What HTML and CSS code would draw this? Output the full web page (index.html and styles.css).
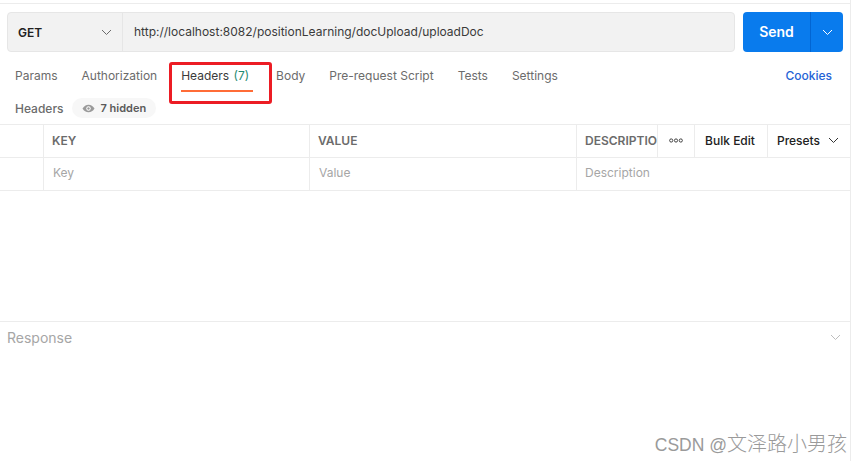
FILE: index.html
```html
<!DOCTYPE html>
<html>
<head>
    <title>Headers</title>
    <link rel="stylesheet" href="styles.css">
</head>
<body>
    <div class="panel">
        <div class="url-row">
            <div class="url-box">
                <div class="method">
                    <span>GET</span>
                    <svg class="chev" width="11" height="7" viewBox="0 0 11 7"><path d="M1 1l4.5 4.5L10 1" fill="none" stroke="#6b6b6b"/></svg>
                </div>
                <div class="url">http://localhost:8082/positionLearning/docUpload/uploadDoc</div>
            </div>
            <div class="send">
                <div class="send-label">Send</div>
                <div class="send-more">
                    <svg width="11" height="7" viewBox="0 0 11 7"><path d="M1 1l4.5 4.5L10 1" fill="none" stroke="#fff"/></svg>
                </div>
            </div>
        </div>

        <div class="tabs">
            <div class="tab">Params</div>
            <div class="tab">Authorization</div>
            <div class="tab active">Headers <span class="count">(7)</span></div>
            <div class="tab">Body</div>
            <div class="tab">Pre-request Script</div>
            <div class="tab">Tests</div>
            <div class="tab">Settings</div>
            <div class="cookies">Cookies</div>
        </div>
        <div class="mark"></div>

        <div class="sub-row">
            <span class="sub-title">Headers</span>
            <span class="hidden-pill">
                <svg width="13" height="9" viewBox="0 0 13 9"><path d="M.5 4.5C2 2 4 .7 6.500.7S11 2 12.500 4.500C11 7 9 8.300 6.500 8.300S2 7 .5 4.500z" fill="#9a9a9a"/><circle cx="6.500" cy="4.500" r="2.200" fill="#fff"/><circle cx="6.500" cy="4.500" r="1.200" fill="#9a9a9a"/></svg>
                7 hidden
            </span>
        </div>

        <div class="table">
            <div class="cell"></div>
            <div class="cell head">KEY</div>
            <div class="cell head">VALUE</div>
            <div class="cell head desc">DESCRIPTIO</div>
            <div class="cell tool dots">
                <svg width="14" height="5" viewBox="0 0 14 5"><g fill="none" stroke="#444"><circle cx="2.200" cy="2.500" r="1.600"/><circle cx="7" cy="2.500" r="1.600"/><circle cx="11.800" cy="2.500" r="1.600"/></g></svg>
            </div>
            <div class="cell tool bulk">Bulk Edit</div>
            <div class="cell tool last">Presets
                <svg width="11" height="7" viewBox="0 0 11 7"><path d="M1 1l4.500 4.500L10 1" fill="none" stroke="#333"/></svg>
            </div>

            <div class="cell"></div>
            <div class="cell ph">Key</div>
            <div class="cell ph">Value</div>
            <div class="cell ph wide">Description</div>
        </div>

        <div class="response">
            <span>Response</span>
            <svg width="11" height="7" viewBox="0 0 11 7"><path d="M1 1l4.500 4.500L10 1" fill="none" stroke="#bdbdbd"/></svg>
        </div>
    </div>
    <div class="watermark">CSDN @<span class="wm-name">文泽路小男孩</span></div>
</body>
</html>
```

FILE: styles.css
```css
html, body {
    margin: 0;
    padding: 0;
    height: 461px;
    overflow: hidden;
    background: #fff;
}

body {
    font-family: Inter, "Noto Sans", sans-serif;
    font-size: 12px;
    color: #212121;
    position: relative;
}

.panel {
    width: 851px;
    height: 461px;
    padding-top: 3px;
    box-sizing: border-box;
    border-right: 1px solid #ececec;
}

.url-row {
    display: flex;
    gap: 8px;
    border-top: 1px solid #ececec;
    padding: 8px 7px 0 7px;
}

.url-box {
    width: 728px;
    height: 40px;
    box-sizing: border-box;
    display: flex;
    background: #f2f2f2;
    border: 1px solid #e6e6e6;
    border-radius: 4px;
}

.method {
    width: 115px;
    box-sizing: border-box;
    display: flex;
    align-items: center;
    justify-content: space-between;
    padding: 0 10px;
    border-right: 1px solid #e6e6e6;
    font-weight: 600;
    color: #212121;
}

.url {
    padding-left: 11px;
    line-height: 37px;
    color: #3a3a3a;
}

.send {
    width: 100px;
    height: 40px;
    display: flex;
    background: #097bed;
    border-radius: 4px;
    color: #fff;
    font-size: 14px;
    font-weight: 600;
}

.send-label {
    width: 67px;
    text-align: center;
    line-height: 40px;
    border-right: 1px solid #0265d2;
}

.send-more {
    flex: 1;
    display: flex;
    align-items: center;
    justify-content: center;
}

.tabs {
    display: flex;
    align-items: center;
    gap: 24px;
    height: 38px;
    margin-top: 4px;
    padding: 0 15px;
    color: #6b6b6b;
}

.tab {
    white-space: nowrap;
}

.tab.active {
    color: #3a3a3a;
    margin-right: 3px;
}

.count {
    color: #1f8a72;
    margin-left: 1px;
}

.cookies {
    margin-left: auto;
    padding-right: 3px;
    color: #2563d6;
    font-weight: 500;
}

.mark {
    position: absolute;
    left: 169px;
    top: 62px;
    width: 103px;
    height: 42px;
    box-sizing: border-box;
    border: 3px solid #ec1c24;
    border-radius: 3px;
}

.mark::after {
    content: "";
    position: absolute;
    left: 9px;
    top: 25px;
    width: 72px;
    height: 2px;
    background: #ff6c37;
}

.sub-row {
    display: flex;
    align-items: center;
    gap: 8px;
    height: 20px;
    margin-top: 4px;
    padding-left: 15px;
    color: #6b6b6b;
    font-weight: 500;
}

.hidden-pill {
    display: flex;
    align-items: center;
    gap: 6px;
    height: 20px;
    padding: 0 10px;
    border-radius: 10px;
    background: #f7f7f7;
    font-size: 11px;
    font-weight: 600;
    color: #5a5a5a;
}

.table {
    display: grid;
    grid-template-columns: 44px 266px 267px 81px 37px 73px 1fr;
    grid-auto-rows: 33px;
    margin-top: 6px;
    border-top: 1px solid #ececec;
}

.cell {
    display: flex;
    align-items: center;
    box-sizing: border-box;
    padding-left: 8px;
    padding-bottom: 2px;
    border-right: 1px solid #ececec;
    border-bottom: 1px solid #ececec;
    white-space: nowrap;
    overflow: hidden;
}

.head {
    color: #6b6b6b;
    font-weight: 600;
}

.tool {
    color: #212121;
    font-weight: 500;
    justify-content: center;
    padding-left: 0;
}

.bulk {
    padding-right: 2px;
}

.last {
    gap: 8px;
    border-right: 0;
    padding-right: 2px;
}

.ph {
    color: #a6a6a6;
    padding-left: 9px;
    padding-bottom: 4px;
}

.wide {
    grid-column: 4 / 8;
    border-right: 0;
    padding-left: 8px;
}

.response {
    display: flex;
    align-items: center;
    justify-content: space-between;
    margin-top: 130px;
    height: 30px;
    padding: 0 9px 2px 7px;
    border-top: 1px solid #ececec;
    font-size: 14px;
    color: #a6a6a6;
}

.watermark {
    position: absolute;
    right: 15px;
    top: 428px;
    font-family: "Liberation Sans", "Noto Sans CJK SC", sans-serif;
    font-size: 17.5px;
    color: #9a9a9a;
}

.wm-name {
    font-size: 20px;
    font-weight: 300;
}
```
